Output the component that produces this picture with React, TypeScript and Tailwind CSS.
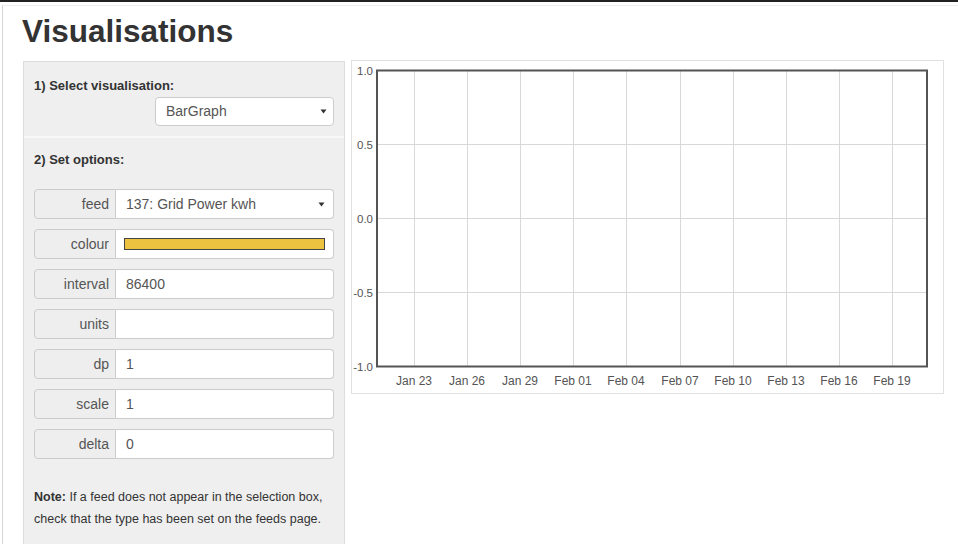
import React from 'react'

const font = { fontFamily: '"Liberation Sans", Arial, sans-serif' }

const ticksX = ['Jan 23', 'Jan 26', 'Jan 29', 'Feb 01', 'Feb 04', 'Feb 07', 'Feb 10', 'Feb 13', 'Feb 16', 'Feb 19']
const ticksY = ['1.0', '0.5', '0.0', '-0.5', '-1.0']

function Caret() {
  return (
    <svg width="7" height="5" viewBox="0 0 7 5" className="shrink-0">
      <polygon points="0.5,0.5 6.5,0.5 3.5,4.5" fill="#333" />
    </svg>
  )
}

function Row({ label, children }: { label: string; children?: React.ReactNode }) {
  return (
    <div className="flex h-[30px] w-[300px]">
      <div className="w-[82px] shrink-0 flex items-center justify-end pr-[6px] bg-[#eee] border border-[#ccc] rounded-l-[4px] text-[14px] text-[#555]">
        {label}
      </div>
      <div className="flex-1 min-w-0 flex items-center bg-white border border-l-0 border-[#ccc] rounded-r-[4px] pl-[10px] pr-[8px] text-[14px] text-[#555]">
        {children}
      </div>
    </div>
  )
}

function Chart() {
  const x0 = 62
  const step = 53.1
  return (
    <svg width="591" height="332" className="block">
      {[83.5, 157.5, 231.5].map(y => (
        <line key={y} x1={25} x2={575} y1={y} y2={y} stroke="#d8d8d8" strokeWidth="1" />
      ))}
      {ticksX.map((t, i) => (
        <line key={t} x1={Math.round(x0 + i * step) + 0.5} x2={Math.round(x0 + i * step) + 0.5} y1={9.5} y2={305.5} stroke="#d8d8d8" strokeWidth="1" />
      ))}
      <rect x={25} y={9.5} width={550} height={296} fill="none" stroke="#545454" strokeWidth="2" />
      {ticksY.map((t, i) => (
        <text key={t} x={21} y={9.5 + i * 74 + 4} textAnchor="end" fontSize="11.5" fill="#545454" style={font}>{t}</text>
      ))}
      {ticksX.map((t, i) => (
        <text key={t} x={Math.round(x0 + i * step)} y={324} textAnchor="middle" fontSize="12" fill="#545454" style={font}>{t}</text>
      ))}
    </svg>
  )
}

export default function App() {
  return (
    <div className="w-[958px] h-[544px] overflow-hidden bg-white border-t-2 border-[#222]" style={font}>
      <div className="mt-[3px] ml-[2px] h-full border-l border-t border-[#d4d4d4] border-t-[#eee] pl-[20px]">
        <h1 className="text-[31.5px] font-bold text-[#333] leading-[36px] pt-[7px] -ml-px">Visualisations</h1>
        <div className="flex items-start gap-[6px] mt-[12px]">
          <div className="w-[322px] h-[500px] shrink-0 bg-[#efefef] border border-[#ddd]">
            <div className="px-[10px] pt-[15px] pb-[10px]">
              <div className="text-[13px] font-bold text-[#333] leading-[18px]">1) Select visualisation:</div>
              <div className="flex justify-end mt-[2px]">
                <div className="w-[179px] h-[29px] bg-white border border-[#ccc] rounded-[4px] flex items-center justify-between pl-[10px] pr-[6px] text-[14px] text-[#555]">
                  <span>BarGraph</span>
                  <Caret />
                </div>
              </div>
            </div>
            <div className="border-t-2 border-[#f8f8f8] pl-[10px] pt-[13px]">
              <div className="text-[13px] font-bold text-[#333] leading-[18px]">2) Set options:</div>
              <div className="flex flex-col gap-[10px] mt-[20px]">
                <Row label="feed">
                  <div className="flex-1 flex items-center justify-between">
                    <span>137: Grid Power kwh</span>
                    <Caret />
                  </div>
                </Row>
                <Row label="colour">
                  <div className="w-[202px] h-[12px] -ml-[2px] bg-[#edc240] border border-[#444]" />
                </Row>
                <Row label="interval">86400</Row>
                <Row label="units" />
                <Row label="dp">1</Row>
                <Row label="scale">1</Row>
                <Row label="delta">0</Row>
              </div>
              <p className="mt-[27px] text-[12.5px] leading-[22px] text-[#333]">
                <b>Note:</b> If a feed does not appear in the selection box,
                <br />
                check that the type has been set on the feeds page.
              </p>
            </div>
          </div>
          <div className="w-[593px] h-[334px] shrink-0 bg-white border border-[#e0e0e0] -mt-px">
            <Chart />
          </div>
        </div>
      </div>
    </div>
  )
}
